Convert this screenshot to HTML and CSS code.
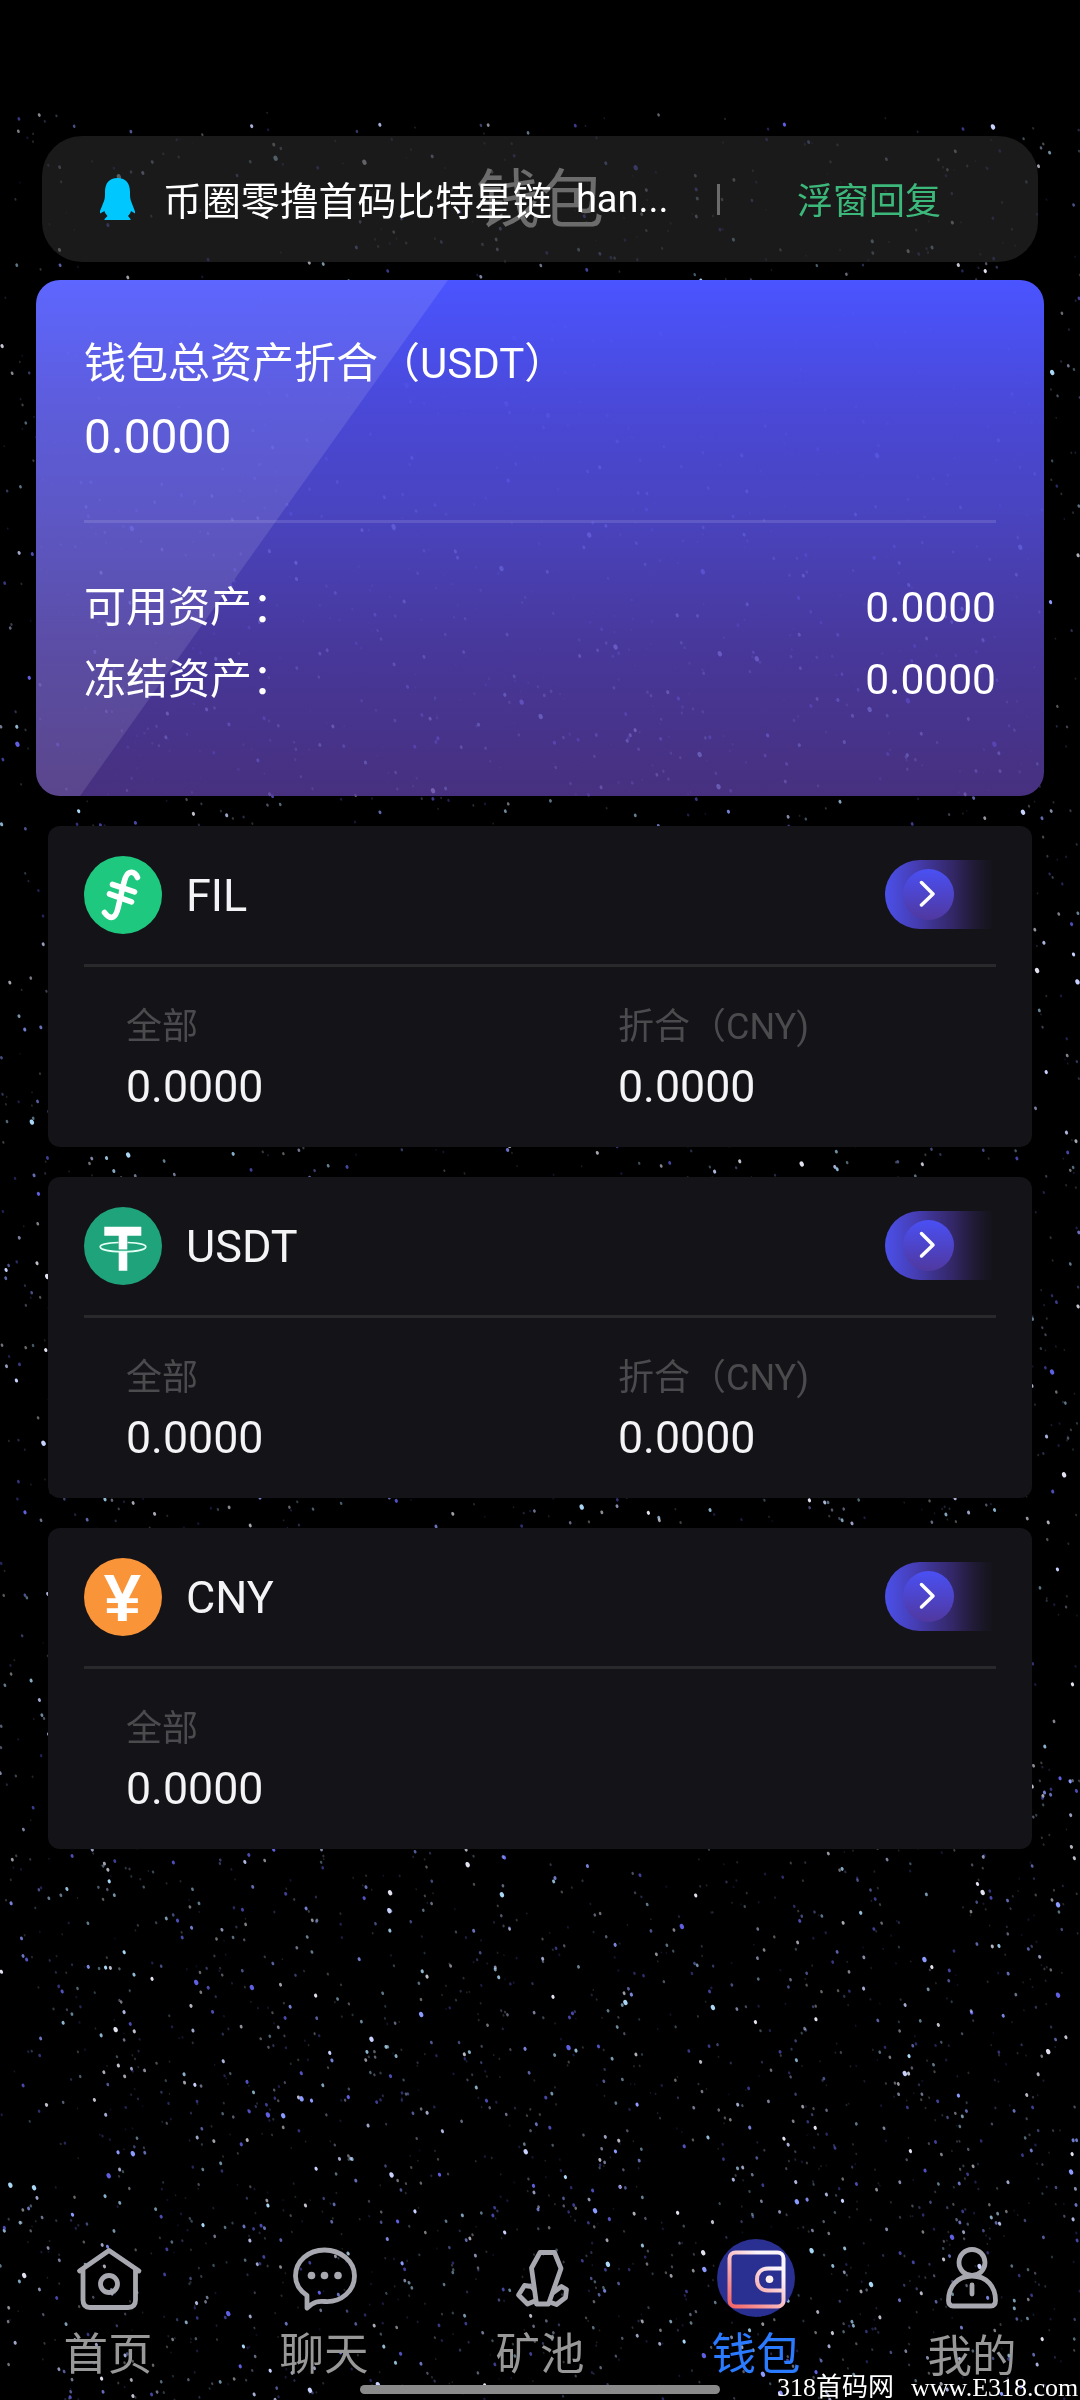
FILE: index.html
```html
<!DOCTYPE html>
<html lang="zh-CN">
<head>
<meta charset="utf-8">
<title>钱包</title>
<link rel="stylesheet" href="styles.css">
</head>
<body>
<div class="screen">
  <canvas class="stars" width="1080" height="2288"></canvas>

  <header class="header"><h1 class="header-title">钱包</h1></header>

  <main class="content">
    <section class="summary">
      <div class="summary-label">钱包总资产折合（USDT）</div>
      <div class="summary-total">0.0000</div>
      <div class="summary-line"></div>
      <div class="summary-row"><span>可用资产：</span><span>0.0000</span></div>
      <div class="summary-row"><span>冻结资产：</span><span>0.0000</span></div>
    </section>

    <section class="coin">
      <div class="coin-head">
        <svg class="coin-icon" viewBox="0 0 78 78"><circle cx="39" cy="39" r="39" fill="#1ec97f"/><g fill="none" stroke="#fff" stroke-width="5.6" stroke-linecap="round" stroke-linejoin="round"><path d="M53.500 21.500C51 15 44.500 14 41.500 21.500C38.500 30 37.500 38 34 52C32 61 27.500 65.500 20.500 56.500"/><path d="M28.500 28.500L50.500 35.800M25.500 38L47.500 45.800"/></g></svg>
        <span class="coin-name">FIL</span>
        <svg class="go" viewBox="0 0 111 69"><use href="#go"/></svg>
      </div>
      <div class="coin-body">
        <div class="cell"><span class="cell-label">全部</span><span class="cell-value">0.0000</span></div>
        <div class="cell"><span class="cell-label">折合（CNY)</span><span class="cell-value">0.0000</span></div>
      </div>
    </section>

    <section class="coin">
      <div class="coin-head">
        <svg class="coin-icon" viewBox="0 0 78 78"><circle cx="39" cy="39" r="39" fill="#1fa37b"/><path d="M20.300 19.700H57.300V28.700H43.300V63.700H34.700V28.700H20.300Z" fill="#fff"/><path d="M34 43.200H44" stroke="#1fa37b" stroke-width="1.500"/><path d="M34.500 35.500C23 35.800 16.200 37.700 16.200 39.700C16.200 42.600 26 44.600 39 44.600S61.800 42.600 61.800 39.700C61.800 37.700 55 35.800 43.500 35.500" fill="none" stroke="#e4fff4" stroke-width="1.700"/></svg>
        <span class="coin-name">USDT</span>
        <svg class="go" viewBox="0 0 111 69"><use href="#go"/></svg>
      </div>
      <div class="coin-body">
        <div class="cell"><span class="cell-label">全部</span><span class="cell-value">0.0000</span></div>
        <div class="cell"><span class="cell-label">折合（CNY)</span><span class="cell-value">0.0000</span></div>
      </div>
    </section>

    <section class="coin">
      <div class="coin-head">
        <svg class="coin-icon" viewBox="0 0 78 78"><circle cx="39" cy="39" r="39" fill="#fa9438"/><text class="yen" x="38.500" y="63" text-anchor="middle">¥</text></svg>
        <span class="coin-name">CNY</span>
        <svg class="go" viewBox="0 0 111 69"><use href="#go"/></svg>
      </div>
      <div class="coin-body">
        <div class="cell"><span class="cell-label">全部</span><span class="cell-value">0.0000</span></div>
      </div>
    </section>
  </main>

  <nav class="tabs">
    <div class="tab">
      <svg class="tab-icon" viewBox="0 0 78 78" fill="none" stroke="#a8a8b0" stroke-width="4.800" stroke-linejoin="round" stroke-linecap="round"><path d="M10.500 32L40 11.500L70 32M14 31V61Q14 68.500 21 68.500H59Q66.500 68.500 66.500 61V31"/><circle cx="40" cy="45" r="8.500"/></svg>
      <span>首页</span>
    </div>
    <div class="tab">
      <svg class="tab-icon" viewBox="0 0 78 78" fill="none" stroke="#a8a8b0" stroke-width="4.800" stroke-linejoin="round"><path d="M22 69V56.500C14 51 10.500 44 10.500 37C10.500 22 23.500 11 39.500 11S69.500 22 69.500 37S56 63.500 40 62.500C34 62 29 62 22 69Z"/><g fill="#a8a8b0" stroke="none"><circle cx="26.500" cy="36.500" r="3.800"/><circle cx="39.500" cy="36.500" r="3.800"/><circle cx="53" cy="36.500" r="3.800"/></g></svg>
      <span>聊天</span>
    </div>
    <div class="tab">
      <svg class="tab-icon" viewBox="0 0 78 78" fill="none" stroke="#a8a8b0" stroke-width="4.800" stroke-linejoin="round"><path d="M39 13.500H53.500L60 29.500L47.500 65H35.500L30.500 29Z"/><path d="M30.500 47.500L23.500 46.500L17.500 56L26.500 65L35 61.500M33.500 51L30.500 47.500M51.500 54L60.500 47.500L65.500 50.500L64.500 58.500L55.500 65.500L48.500 63"/></svg>
      <span>矿池</span>
    </div>
    <div class="tab tab-active">
      <svg class="tab-icon" viewBox="0 0 78 78"><circle cx="39" cy="39" r="39" fill="#293091"/><g fill="none" stroke="url(#walletStroke)" stroke-width="4"><rect x="12.500" y="13.500" width="54" height="54" rx="6"/><path d="M67 29.500H51C43.500 29.500 40 34.500 40 40.500S43.500 51.500 51 51.500H67"/></g><circle cx="52.500" cy="40.200" r="3.800" fill="#fff0f0"/></svg>
      <span>钱包</span>
    </div>
    <div class="tab tab-last">
      <svg class="tab-icon" viewBox="0 0 78 78" fill="none" stroke="#a8a8b0" stroke-width="4.800" stroke-linecap="round"><circle cx="39" cy="23.500" r="13"/><path d="M39 37C24 37 15.500 48 15.500 61.500Q15.500 67 20.500 67H57.500Q62.500 67 62.500 61.500C62.500 48 54 37 39 37ZM39 46V55"/></svg>
      <span>我的</span>
    </div>
  </nav>

  <aside class="notice">
    <svg class="notice-icon" viewBox="0 0 35 42"><path d="M17.500 0C26 0 30 5.500 30 14C30 18 30 20 31 23L35 33.500V35.500L31 33C30.500 35 29.500 36.500 28 38L30.500 41V42H4.500V41L7.500 38C6 36.500 5 35 4.500 33L0 35.500V33L4 23C5 20 5 18 5 14C5 5.500 9 0 17.500 0Z" fill="#00c8ff"/></svg>
    <span class="notice-text">币圈零撸首码比特星链</span>
    <span class="notice-tail">han...</span>
    <span class="notice-sep"></span>
    <span class="notice-reply">浮窗回复</span>
  </aside>
  <div class="home-bar"></div>
  <div class="site-mark"><span>318首码网</span><span>www.E318.com</span></div>

  <svg class="defs" width="0" height="0">
    <defs>
      <linearGradient id="goTrack"><stop offset="0" stop-color="#4a50ea"/><stop offset=".28" stop-color="#463db2"/><stop offset=".62" stop-color="#382a72" stop-opacity=".85"/><stop offset=".98" stop-color="#2c2150" stop-opacity="0"/></linearGradient>
      <linearGradient id="goKnob" x2="0" y2="1"><stop offset="0" stop-color="#4a50f4"/><stop offset="1" stop-color="#50389f"/></linearGradient>
      <linearGradient id="walletStroke" gradientUnits="userSpaceOnUse" x1="12" y1="68" x2="52" y2="24"><stop offset="0" stop-color="#f45f5f"/><stop offset="1" stop-color="#fbf4fa"/></linearGradient>
      <g id="go"><path d="M34.500 0H111V69H34.500A34.500 34.500 0 0 1 34.500 0Z" fill="url(#goTrack)"/><circle cx="43.500" cy="34.500" r="25.500" fill="url(#goKnob)"/><path d="M36.500 22.500L48 34L36.500 45" fill="none" stroke="#fff" stroke-width="3.500" stroke-linecap="round" stroke-linejoin="round"/></g>
    </defs>
  </svg>
</div>
<script src="stars.js"></script>
</body>
</html>
```
FILE: styles.css
```css
* { box-sizing: border-box; }
body {
  margin: 0;
  background: #000;
  color: #fff;
  font-family: Roboto, "Noto Sans CJK SC", sans-serif;
}
.screen {
  position: relative;
  display: flex;
  flex-direction: column;
  width: 1080px;
  height: 2400px;
  overflow: hidden;
}
.screen > * { position: relative; }
.screen > .stars { position: absolute; left: 0; top: 112px; }
.screen > .defs { position: absolute; }

.header {
  display: flex;
  justify-content: center;
  height: 280px;
  padding-top: 161px;
}
.header-title { margin: 0; font-size: 64px; line-height: 80px; font-weight: 400; }

.content { display: flex; flex-direction: column; gap: 30px; padding: 0 48px; }

.summary {
  position: relative;
  height: 516px;
  margin: 0 -12px;
  padding: 54px 48px 0;
  border-radius: 24px;
  overflow: hidden;
  background: linear-gradient(#4a54ff 0%, rgba(76, 75, 222, .97) 25%, rgba(81, 75, 212, .9) 45%, rgba(85, 66, 183, .84) 72%, rgba(88, 60, 158, .8) 100%);
}
.summary::before {
  content: "";
  position: absolute;
  inset: 0;
  background: rgba(255, 255, 255, .11);
  clip-path: polygon(0 0, 412px 0, 44px 100%, 0 100%);
}
.summary > * { position: relative; }
.summary-label { font-size: 42px; line-height: 60px; white-space: nowrap; }
.summary-total { margin-top: 13px; font-size: 48px; line-height: 60px; }
.summary-line { height: 3px; margin: 53px 0 49px; background: rgba(255, 255, 255, .12); }
.summary-row {
  display: flex;
  justify-content: space-between;
  height: 72px;
  font-size: 42.500px;
  line-height: 72px;
}
.summary-row span:first-child { font-size: 42px; }

.coin { height: 321px; padding: 0 36px; border-radius: 12px; background: #141318; }
.coin-head {
  display: flex;
  align-items: center;
  height: 141px;
  padding: 0 0 1px;
  border-bottom: 3px solid #29292b;
}
.coin-icon { width: 78px; height: 78px; }
.coin-name { margin-left: 24px; padding-top: 3px; font-size: 45px; line-height: 54px; color: #f4f4f6; }
.go { width: 111px; height: 69px; margin-left: auto; }
.coin-body { display: grid; grid-template-columns: 1fr 1fr; margin: 0 -36px; padding-top: 33px; }
.cell { display: flex; flex-direction: column; padding-left: 78px; }
.cell-label { font-size: 36px; line-height: 54px; color: #4b4b4e; }
.cell-value { margin-top: 6px; font-size: 44.700px; line-height: 54px; color: #f4f4f6; }
.yen { font: 700 67px "Liberation Sans", sans-serif; fill: #fff; }

.tabs {
  display: grid;
  grid-template-columns: repeat(5, 1fr);
  height: 161px;
  margin-top: auto;
}
.tab { display: flex; flex-direction: column; align-items: center; font-size: 44.500px; color: #989898; }
.tab-icon { width: 78px; height: 78px; }
.tab span { margin-top: 10px; line-height: 56px; }
.tab-active { color: #2a7bff; }
.tab .tab-icon + span { white-space: nowrap; }
.tab-last span { margin-top: 12px; }

.screen > .notice {
  position: absolute;
  left: 42px;
  top: 136px;
  display: flex;
  align-items: center;
  width: 996px;
  height: 126px;
  padding-left: 58px;
  border-radius: 40px;
  background: rgba(38, 38, 38, .68);
  white-space: nowrap;
}
.notice-icon { width: 35px; height: 42px; }
.notice-text { margin-left: 28px; padding-bottom: 3px; font-size: 38.900px; }
.notice-tail { margin-left: 24px; font-size: 38px; width: 91px; }
.notice-sep { width: 3px; height: 31px; margin-left: 50px; background: #6b6b6b; }
.notice-reply { margin-left: 77px; padding-bottom: 2px; font-size: 36px; color: #3cb87b; }

.screen > .home-bar {
  position: absolute;
  left: 360px;
  top: 2385px;
  width: 360px;
  height: 9px;
  border-radius: 5px;
  background: #8a8a8a;
}
.screen > .site-mark {
  position: absolute;
  left: 777px;
  top: 2373px;
  display: flex;
  gap: 17px;
  font: 26px/30px "Liberation Serif", "Noto Sans CJK SC", serif;
  white-space: nowrap;
}
```
FILE: stars.js
```js
// Paints the night-sky background with a fixed seed so it is stable between loads.
(function () {
  var canvas = document.querySelector('.stars');
  var ctx = canvas.getContext('2d');
  var seed = 20318;
  function rand() {
    seed = (seed * 1664525 + 1013904223) % 4294967296;
    return seed / 4294967296;
  }
  var tints = ['225,225,240', '200,210,255', '140,155,255', '95,95,225', '170,215,245'];
  for (var i = 0; i < 8600; i++) {
    var x = rand() * canvas.width;
    var y = rand() * canvas.height;
    var keep = 0.4 + 0.6 * (y / canvas.height);
    if (rand() > keep) continue;
    var b = rand();
    var tint = tints[Math.floor(rand() * tints.length)];
    var alpha = b > 0.95 ? 1 : 0.14 + b * b * 0.82;
    var r = b > 0.98 ? 2.4 : 0.9 + b * 0.95;
    ctx.fillStyle = 'rgba(' + tint + ',' + alpha + ')';
    ctx.beginPath();
    ctx.ellipse(x, y, r * 0.85, r * 1.15, -0.4, 0, Math.PI * 2);
    ctx.fill();
  }
})();
```
